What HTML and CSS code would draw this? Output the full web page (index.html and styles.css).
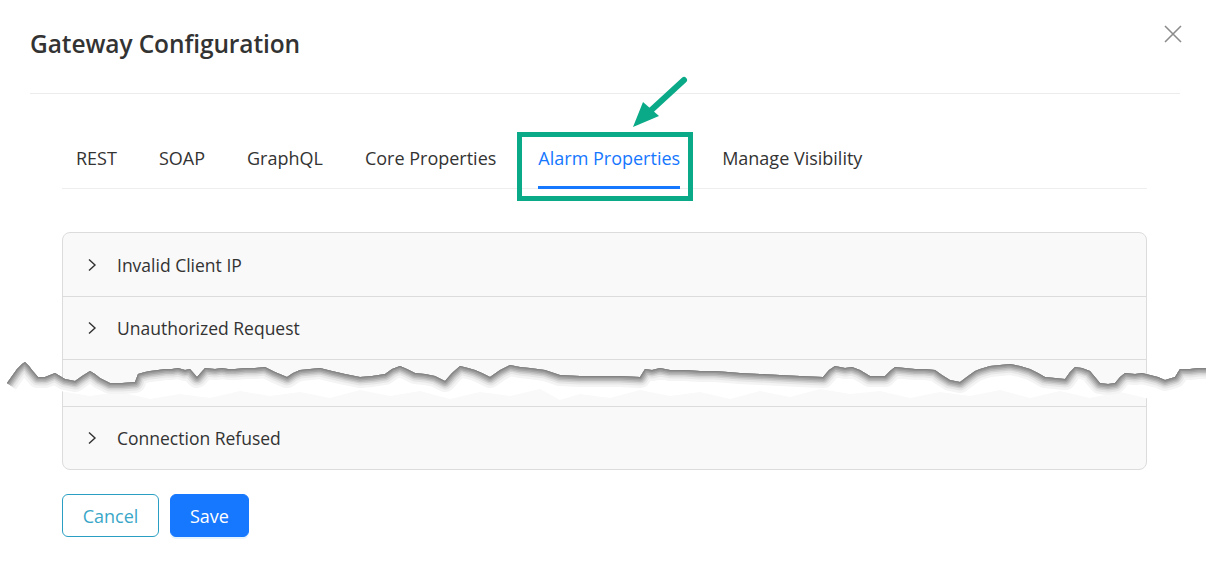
FILE: index.html
```html
<!DOCTYPE html>
<html lang="en">
<head>
<meta charset="utf-8">
<title>Gateway Configuration</title>
<link rel="stylesheet" href="styles.css">
</head>
<body>
<div class="modal">
  <header class="modal-header">
    <h1 class="modal-title">Gateway Configuration</h1>
    <button class="close-btn" aria-label="Close">
      <svg width="18" height="18" viewBox="0 0 18 18"><path d="M1 1 L17 17 M17 1 L1 17" stroke="#8c8c8c" stroke-width="1.6" fill="none"/></svg>
    </button>
  </header>

  <div class="modal-body">
    <nav class="tabs">
      <a class="tab">REST</a>
      <a class="tab">SOAP</a>
      <a class="tab">GraphQL</a>
      <a class="tab">Core Properties</a>
      <a class="tab active">Alarm Properties</a>
      <a class="tab">Manage Visibility</a>
    </nav>

    <div class="accordion">
      <div class="acc-row"><span class="chev"><svg width="10" height="14" viewBox="0 0 10 14"><path d="M2 1.5 L8 7 L2 12.5" stroke="#333" stroke-width="1.4" fill="none"/></svg></span>Invalid Client IP</div>
      <div class="acc-row"><span class="chev"><svg width="10" height="14" viewBox="0 0 10 14"><path d="M2 1.5 L8 7 L2 12.5" stroke="#333" stroke-width="1.4" fill="none"/></svg></span>Unauthorized Request</div>
      <div class="acc-row acc-hidden"></div>
      <div class="acc-row"><span class="chev"><svg width="10" height="14" viewBox="0 0 10 14"><path d="M2 1.5 L8 7 L2 12.5" stroke="#333" stroke-width="1.4" fill="none"/></svg></span>Connection Refused</div>
    </div>

    <div class="actions">
      <button class="btn btn-cancel">Cancel</button>
      <button class="btn btn-save">Save</button>
    </div>
  </div>

  <!-- annotation: highlight box + arrow -->
  <div class="highlight"></div>
  <svg class="arrow" width="80" height="80" viewBox="0 0 80 80">
    <line x1="67" y1="6" x2="30" y2="40" stroke="#0aaa88" stroke-width="6" stroke-linecap="round"/>
    <polygon points="16,53 26,28 42,42" fill="#0aaa88"/>
  </svg>

  <!-- torn paper overlay -->
  <svg class="tear" width="1206" height="56" viewBox="0 0 1206 56">
    <defs>
      <path id="edge" d="M7 29 L12 22 L17 15 L22 10 L25 8 L29 12 L32 16 L38 23 L45 23 L50 21 L55 19 L60 22 L65 25 L75 27 L82 22 L90 17 L95 20 L100 24 L110 29 L122 29 L135 28 L138 20 L145 18 L150 17 L158 16 L165 15 L172 15 L178 14 L185 16 L190 15 L197 23 L205 14 L215 15 L222 14 L228 15 L235 15 L245 14 L255 14 L265 13 L275 18 L287 23 L293 19 L300 16 L310 15 L320 14 L332 17 L345 20 L360 23 L372 22 L385 20 L392 15 L400 12 L407 15 L415 19 L425 20 L435 22 L445 27 L452 19 L460 12 L468 14 L475 16 L482 19 L490 23 L500 16 L510 11 L520 13 L530 14 L545 16 L560 21 L580 22 L600 22 L620 22 L640 23 L645 15 L652 16 L660 14 L670 16 L685 16 L700 17 L715 17 L728 18 L740 19 L760 20 L780 21 L800 22 L823 23 L829 16 L835 12 L845 14 L852 13 L860 16 L870 22 L885 22 L890 17 L895 13 L905 14 L915 15 L925 15 L935 16 L942 21 L950 26 L960 28 L968 22 L975 17 L980 15 L990 12 L1000 11 L1010 10 L1020 12 L1030 15 L1038 19 L1045 23 L1055 24 L1065 25 L1070 18 L1075 13 L1082 14 L1090 17 L1095 23 L1100 29 L1108 30 L1115 29 L1120 23 L1125 19 L1135 20 L1142 19 L1150 21 L1158 23 L1165 26 L1175 23 L1178 18 L1180 15 L1190 15 L1198 14 L1206 14"/>
      <clipPath id="below">
        <path d="M7 29 L12 22 L17 15 L22 10 L25 8 L29 12 L32 16 L38 23 L45 23 L50 21 L55 19 L60 22 L65 25 L75 27 L82 22 L90 17 L95 20 L100 24 L110 29 L122 29 L135 28 L138 20 L145 18 L150 17 L158 16 L165 15 L172 15 L178 14 L185 16 L190 15 L197 23 L205 14 L215 15 L222 14 L228 15 L235 15 L245 14 L255 14 L265 13 L275 18 L287 23 L293 19 L300 16 L310 15 L320 14 L332 17 L345 20 L360 23 L372 22 L385 20 L392 15 L400 12 L407 15 L415 19 L425 20 L435 22 L445 27 L452 19 L460 12 L468 14 L475 16 L482 19 L490 23 L500 16 L510 11 L520 13 L530 14 L545 16 L560 21 L580 22 L600 22 L620 22 L640 23 L645 15 L652 16 L660 14 L670 16 L685 16 L700 17 L715 17 L728 18 L740 19 L760 20 L780 21 L800 22 L823 23 L829 16 L835 12 L845 14 L852 13 L860 16 L870 22 L885 22 L890 17 L895 13 L905 14 L915 15 L925 15 L935 16 L942 21 L950 26 L960 28 L968 22 L975 17 L980 15 L990 12 L1000 11 L1010 10 L1020 12 L1030 15 L1038 19 L1045 23 L1055 24 L1065 25 L1070 18 L1075 13 L1082 14 L1090 17 L1095 23 L1100 29 L1108 30 L1115 29 L1120 23 L1125 19 L1135 20 L1142 19 L1150 21 L1158 23 L1165 26 L1175 23 L1178 18 L1180 15 L1190 15 L1198 14 L1206 14 L1206 56 L0 56 L0 40 Z"/>
      </clipPath>
    </defs>
    <g clip-path="url(#below)">
      <path fill="#ffffff" d="M0 0 L1206 0 L1206 44 L1180 40 L1150 45 L1120 38 L1090 44 L1060 37 L1030 44 L1000 36 L970 42 L940 38 L910 44 L880 37 L850 40 L820 35 L790 43 L760 37 L730 45 L700 38 L670 42 L640 36 L610 44 L580 40 L560 46 L540 35 L510 42 L480 38 L450 45 L420 37 L390 42 L360 36 L330 44 L300 38 L270 42 L240 37 L210 44 L180 40 L150 45 L120 38 L90 42 L60 37 L30 44 L0 40 Z"/>
      <use href="#edge" fill="none" stroke="#f4f4f4" stroke-width="22" stroke-linejoin="round"/>
      <use href="#edge" fill="none" stroke="#e6e6e6" stroke-width="17" stroke-linejoin="round"/>
      <use href="#edge" fill="none" stroke="#d2d2d2" stroke-width="13" stroke-linejoin="round"/>
      <use href="#edge" fill="none" stroke="#bcbcbc" stroke-width="10" stroke-linejoin="round"/>
      <use href="#edge" fill="none" stroke="#a6a6a6" stroke-width="7" stroke-linejoin="round"/>
      <use href="#edge" fill="none" stroke="#939393" stroke-width="4" stroke-linejoin="round"/>
      <use href="#edge" fill="none" stroke="#808080" stroke-width="1.6" stroke-linejoin="round"/>
    </g>
  </svg>
</div>
</body>
</html>
```

FILE: styles.css
```css
* { box-sizing: border-box; }

html, body {
  margin: 0;
  padding: 0;
  background: #ffffff;
}

body {
  font-family: "Open Sans", "Noto Sans", "DejaVu Sans", sans-serif;
  color: #333333;
}

.modal {
  position: relative;
  width: 1206px;
  height: 582px;
  overflow: hidden;
}

.modal-header {
  display: flex;
  justify-content: space-between;
  align-items: flex-start;
  height: 94px;
  margin: 0 26px 0 30px;
  padding-top: 28px;
  border-bottom: 1px solid #ececec;
}

.modal-title {
  margin: 0;
  font-size: 24.5px;
  line-height: 32px;
  font-weight: 600;
  color: #333333;
  letter-spacing: -0.1px;
}

.close-btn {
  margin-top: -3px;
  margin-right: -2px;
  padding: 0;
  border: 0;
  background: none;
  width: 18px;
  height: 18px;
  display: flex;
}

.modal-body {
  padding: 0 59px 0 62px;
}

.tabs {
  display: flex;
  gap: 42px;
  margin-top: 38px;
  padding-left: 14px;
  border-bottom: 1px solid #eeeeee;
}

.tab {
  padding: 14px 0 16px;
  font-size: 18px;
  line-height: 24px;
  color: #333333;
  border-bottom: 3px solid transparent;
  margin-bottom: -1px;
}

.tab.active {
  color: #1677ff;
  border-bottom-color: #1677ff;
}

.accordion {
  margin-top: 43px;
  border: 1px solid #dcdcdc;
  border-radius: 8px;
  background: #f9f9f9;
  overflow: hidden;
}

.acc-row {
  display: flex;
  align-items: center;
  height: 63px;
  padding-left: 24px;
  font-size: 17.5px;
  color: #333333;
  border-top: 1px solid #dcdcdc;
}

.acc-row:first-child {
  border-top: 0;
  height: 63px;
}

.acc-row:last-child {
  height: 63px;
}

.acc-hidden {
  height: 47px;
}

.chev {
  display: flex;
  width: 10px;
  margin-right: 20px;
}

.actions {
  display: flex;
  gap: 11px;
  margin-top: 24px;
}

.btn {
  height: 43px;
  border-radius: 6px;
  font-family: inherit;
  font-size: 18px;
  padding: 0;
}

.btn-cancel {
  width: 97px;
  background: #ffffff;
  border: 1px solid #2a9fc3;
  color: #3aa7c8;
}

.btn-save {
  width: 79px;
  background: #1677ff;
  border: 1px solid #1677ff;
  color: #ffffff;
  box-shadow: 0 2px 0 rgba(5, 145, 255, 0.1);
}

.highlight {
  position: absolute;
  left: 517px;
  top: 132px;
  width: 176px;
  height: 69px;
  border: 5px solid #0aaa88;
}

.arrow {
  position: absolute;
  left: 617px;
  top: 74px;
}

.tear {
  position: absolute;
  left: 0;
  top: 354px;
}
```
